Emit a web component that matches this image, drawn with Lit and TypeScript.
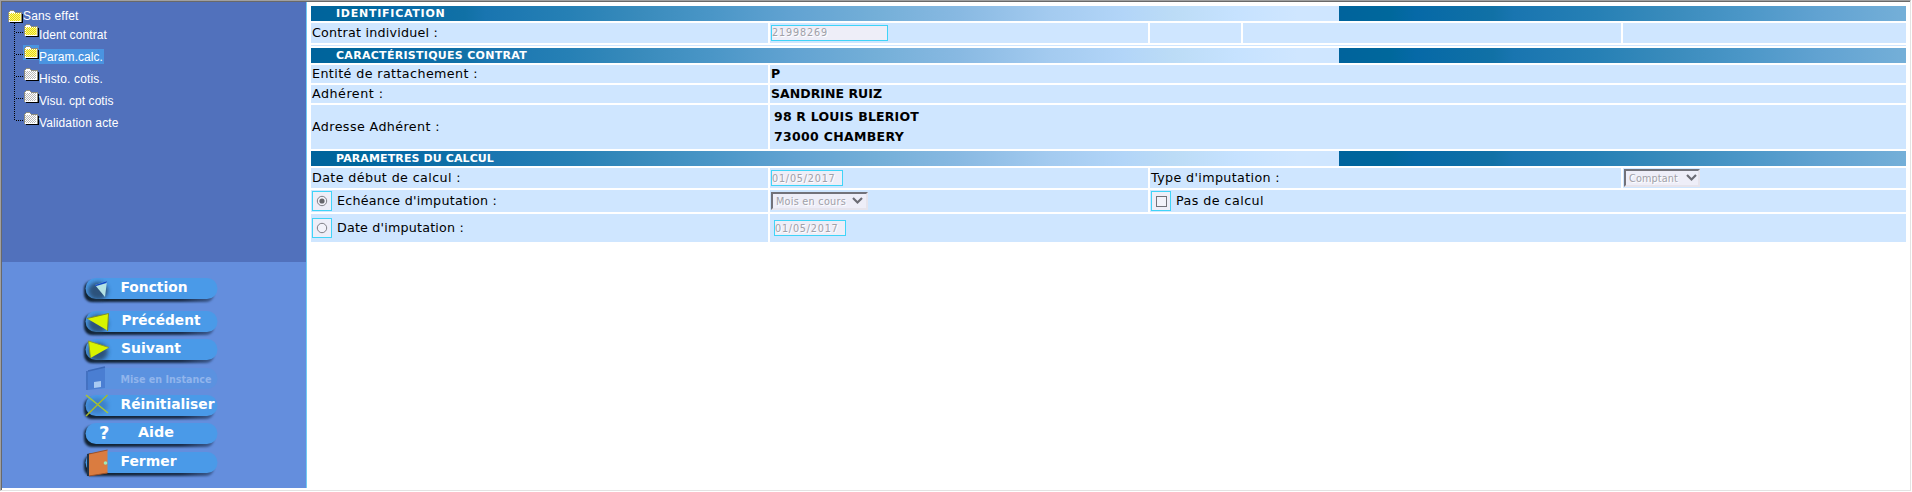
import { LitElement, html, svg, css, nothing } from 'lit';
import { customElement, property } from 'lit/decorators.js';
import { classMap } from 'lit/directives/class-map.js';
import { styleMap } from 'lit/directives/style-map.js';

const measure = document.createElement('canvas').getContext('2d')!;

/** Text tracked so that it takes a given width. */
@customElement('fit-text')
class FitText extends LitElement {
  @property() text = '';
  @property({ type: Number }) width = 0;
  @property() font = '13px "DejaVu Sans"';
  static styles = css`
    :host { display: inline-block; white-space: pre; }
  `;
  render() {
    measure.font = this.font;
    const natural = measure.measureText(this.text).width;
    const tracking = (this.width - natural) / this.text.length;
    return html`<span style=${styleMap({ font: this.font + ', sans-serif', letterSpacing: tracking.toFixed(3) + 'px' })}>${this.text}</span>`;
  }
}

const LABEL = '12.7px "DejaVu Sans"';
const BOLD = 'bold 12.5px "DejaVu Sans"';
const HEAD = 'bold 11px "DejaVu Sans"';
const SMALL = '9.7px "DejaVu Sans"';
const TREE = '12px "Liberation Sans"';

const fit = (text: string, width: number, font = LABEL) =>
  html`<fit-text .text=${text} .width=${width} .font=${font}></fit-text>`;

@customElement('nav-tree')
class NavTree extends LitElement {
  static styles = css`
    :host { display: block; padding: 6px 0 0 6px; color: #fff; }
    .root, .item { display: flex; align-items: flex-start; }
    .root { height: 15px; margin-left: -1px; }
    .root .icon { padding-top: 1px; }
    .label { height: 15px; line-height: 17px; font-size: 12px; padding: 0 1px 0 0; }
    .items { margin-left: 6px; }
    .item { height: 22px; }
    .item .label { margin-top: 4px; }
    .item .icon { width: 16px; height: 15px; padding-top: 0; }
    .on { background: #4a94e1; }
    svg { display: block; }
  `;
  folder(open: boolean) {
    const dots = [];
    for (let y = 0; y < 8; y++) for (let x = y % 2; x < 11; x += 2)
      dots.push(svg`<rect x=${x + 2} y=${y + 4} width="1" height="1"/>`);
    return html`<svg width="16" height="15" shape-rendering="crispEdges">
      <path d="M3 14h13V5h-1v8H3z" fill="#000"/>
      <path d="M1 3h1V2h1V1h4v1h1v1h7v10H1z" fill="#8c8c80"/>
      <path d="M2 3h1V2h4v1h1v1h6v9H2z" fill="#fff"/>
      <path d="M3 5h11v7H3z" fill=${open ? '#fff67c' : '#fff'}/>
      <g fill=${open ? '#e4da10' : '#b8b8b8'}>${dots}</g>
    </svg>`;
  }
  branch(last: boolean) {
    return html`<svg width="9" height="22" shape-rendering="crispEdges" fill="none" stroke="#000">
      <path d=${last ? 'M.5 0V10' : 'M.5 0V22'} stroke-dasharray="1 1"/>
      <path d="M2 9.5H9" stroke-dasharray="1 1"/>
    </svg>`;
  }
  render() {
    const items: [string, number, boolean, boolean][] = [
      ['Ident contrat', 68, true, false],
      ['Param.calc.', 64, true, true],
      ['Histo. cotis.', 64, false, false],
      ['Visu. cpt cotis', 74.5, false, false],
      ['Validation acte', 79.5, false, false],
    ];
    return html`
      <div class="root"><div class="icon">${this.folder(true)}</div><div class="label">${fit('Sans effet', 55.5, TREE)}</div></div>
      <div class="items">${items.map(([text, width, open, on], i) => html`
        <div class="item">${this.branch(i === items.length - 1)}
          <div class=${classMap({ icon: true, on })}>${this.folder(open)}</div>
          <div class=${classMap({ label: true, on })}>${fit(text, width, TREE)}</div>
        </div>`)}
      </div>`;
  }
}

type Command = { text: string; x: number; width: number; gap: number; icon: unknown; off?: boolean };

@customElement('command-bar')
class CommandBar extends LitElement {
  static styles = css`
    :host { display: flex; flex-direction: column; align-items: flex-start; padding: 16px 0 0 81px; box-sizing: border-box; }
    svg { display: block; height: 21px; overflow: visible; }
    text { font-family: "DejaVu Sans", sans-serif; font-weight: bold; font-size: 13.5px; fill: #fff; }
    .off text { font-size: 10.5px; fill: #91b5ec; }
    .g6 { margin-top: 6px; } .g7 { margin-top: 7px; } .g8 { margin-top: 8px; } .g12 { margin-top: 12px; }
  `;
  render() {
    const shade = svg`<ellipse cx="15" cy="13" rx="10" ry="9" fill="#203a58" opacity=".75" filter="url(#soft)"/>`;
    const commands: Command[] = [
      { text: 'Fonction', x: 37.5, width: 67, gap: 0, icon: svg`${shade}<path d="M12 7L24 3L22 19Z" fill="#b4e2e4"/><path d="M12 7L24 3L23.5 5L12.5 8.2Z" fill="#1048c8"/>` },
      { text: 'Précédent', x: 38.5, width: 79, gap: 12, icon: svg`${shade}<path d="M4 7.5L25.5 2.5L24.5 19.5Z" fill="#d8f400"/><path d="M4 7.5L25.5 2.5M25.5 2.5L24.5 20" stroke="#7d8c28" stroke-width="1"/>` },
      { text: 'Suivant', x: 38, width: 60, gap: 7, icon: svg`${shade}<path d="M5.5 2L26 8.5L7.5 19Z" fill="#d8f400"/><path d="M5.5 2L26 8.5M5.5 2L7.5 19" stroke="#8c9c28"/>` },
      { text: 'Mise en Instance', x: 37.5, width: 91, gap: 8, off: true, icon: svg`<path d="M5 3L22 -1V20L5 22Z" fill="#4a7ed2"/><path d="M5 3L22 -1M4 3V22" stroke="#3b68b8" stroke-width="1.5"/><path d="M11 14L18 13V19L11 20Z" fill="#a8caf2"/>` },
      { text: 'Réinitialiser', x: 37.5, width: 94, gap: 6, icon: svg`<ellipse cx="14" cy="11" rx="11" ry="8" fill="#2c5c9c" opacity=".4" filter="url(#soft)"/><path d="M3 0L25 18" stroke="#a8c832" stroke-width="1.5"/><path d="M3 21L24.5 0" stroke="#a8ba28" stroke-width="1.5"/>` },
      { text: 'Aide', x: 55, width: 36, gap: 7, icon: svg`<text x="16" y="15.5" style="font-size:18px">?</text>` },
      { text: 'Fermer', x: 37.5, width: 56, gap: 8, icon: svg`<path d="M4 2L8 1V24H4Z" fill="#203448"/><path d="M6 2L24.5 -2V21L6 24Z" fill="#da7c40"/><path d="M6 2L24.5 -2M6 24L24.5 21" stroke="#9c5028" fill="none"/><circle cx="22.500" cy="11" r="1.8" fill="#9fe8b8"/>` },
    ];
    return commands.map((c) => html`
      <svg width="136" height="21" class=${`g${c.gap} ${c.off ? 'off' : ''}`} role="button">
        <defs>
          <filter id="soft" x="-30%" y="-50%" width="160%" height="200%"><feGaussianBlur stdDeviation="2"/></filter>
          <linearGradient id="cast" x1="0" x2="1"><stop offset="0" stop-color="#10202f"/><stop offset=".75" stop-color="#1b2e4c"/><stop offset="1" stop-color="#1b2e4c" stop-opacity=".5"/></linearGradient>
        </defs>
        ${c.off ? nothing : svg`<rect x="1" y="3" width="130" height="21" rx="8" fill="url(#cast)" style="filter:blur(1.3px)"/>`}
        <rect x="2.5" y="0" width="132" height="21" rx="10.5" fill=${c.off ? '#5b92e0' : '#4a9ae8'}/>
        ${c.icon}
        <text x=${c.x} y=${c.off ? 14.5 : 14.3} textLength=${c.width} lengthAdjust="spacingAndGlyphs">${c.text}</text>
      </svg>`);
  }
}

@customElement('contract-form')
class ContractForm extends LitElement {
  static styles = css`
    :host {
      display: grid; gap: 2px; color: #000; align-content: start;
      grid-template-columns: 457px 378px 91px 378px 283px;
      grid-template-rows: 15px 20px 1px 15px 18px 18px 44px 15px 20px 22px 28px;
    }
    .head {
      grid-column: 1 / -1; color: #fff; padding-left: 25px; height: 15px; display: flex; align-items: center; line-height: 13px;
      background: linear-gradient(90deg, #00639c 0, #00689c 5%, #0669a7 7.5%, #1171a6 15%, #1975b0 17%, #2680b5 25%, #398bbc 32%,
        #4a96c7 39%, #62a3d2 47%, #74afd8 55%, #88b9e2 63%, #a4cbf0 72%, #b2d5f8 79%, #bcdcf6 84%, #c6e2ff 90%, #cfe6ff 96%) 0 0 / 1028px 100%;
    }
    .cell { background: #cfe6ff; display: flex; align-items: center; padding-left: 1px; line-height: 16px; }
    .wide { grid-column: 1 / -1; }
    .rest { grid-column: 2 / -1; }
    .two { grid-column: span 2; }
    .toend { grid-column: 3 / -1; }
    .c { display: flex; flex-direction: column; align-items: flex-start; justify-content: center; gap: 4px; padding-left: 4px; }
    .field {
      box-sizing: border-box; height: 16px; width: 72px; border: 1px solid #40d4f8; background: #eeeef8;
      color: #a0a0a8; text-shadow: 1px 1px #fff; display: flex; align-items: center; line-height: 12px; padding-bottom: 1px;
    }
    .long { width: 117px; }
    .in { margin-left: 3px; }
    .drop {
      box-sizing: border-box; height: 18px; width: 97px; border: 2px solid; border-color: #72727a #e6e4ec #e6e4ec #72727a;
      background: #eeeef8; color: #a0a0a8; text-shadow: 1px 1px #fff; display: flex; align-items: center;
      justify-content: space-between; padding: 0 3px; line-height: 12px;
    }
    .short { width: 76px; padding: 0 1px 0 3px; }
    .tick { box-sizing: border-box; width: 20px; height: 20px; margin-right: 5px; border: 1px solid #40d4f8; background: #eeeef8; flex: none; }
    .raise { margin-bottom: 1px; }
    svg { display: block; }
  `;
  head(text: string, width: number) {
    return html`<div class="head">${fit(text, width, HEAD)}</div>`;
  }
  field(text: string, width: number, cls = '') {
    return html`<div class="field ${cls}">${fit(text, width, SMALL)}</div>`;
  }
  drop(text: string, width: number, cls = '') {
    return html`<div class="drop ${cls}">${fit(text, width, SMALL)}
      <svg width="11" height="8"><path d="M1 1L5.5 5.5L10 1" fill="none" stroke="#6c6c74" stroke-width="2.2"/></svg></div>`;
  }
  radio(on: boolean) {
    return html`<div class="tick"><svg width="18" height="18">
      <circle cx="9" cy="9" r="4.7" fill="#f2f2fa" stroke="#808088"/>
      ${on ? svg`<circle cx="9" cy="9" r="2.6" fill="#66666c"/>` : nothing}</svg></div>`;
  }
  render() {
    return html`
      ${this.head('IDENTIFICATION', 109.5)}
      <div class="cell">${fit('Contrat individuel :', 126)}</div>
      <div class="cell"><div class="raise">${this.field('21998269', 56, 'long')}</div></div>
      <div class="cell"></div><div class="cell"></div><div class="cell"></div>
      <div class="cell wide"></div>
      ${this.head('CARACTÉRISTIQUES CONTRAT', 191)}
      <div class="cell">${fit('Entité de rattachement :', 166)}</div>
      <div class="cell rest">${fit('P', 9.5, BOLD)}</div>
      <div class="cell">${fit('Adhérent :', 71.5)}</div>
      <div class="cell rest">${fit('SANDRINE RUIZ', 111, BOLD)}</div>
      <div class="cell">${fit('Adresse Adhérent :', 128)}</div>
      <div class="cell rest c">${fit('98 R LOUIS BLERIOT', 145, BOLD)}${fit('73000 CHAMBERY', 130, BOLD)}</div>
      ${this.head('PARAMETRES DU CALCUL', 158)}
      <div class="cell">${fit('Date début de calcul :', 149)}</div>
      <div class="cell">${this.field('01/05/2017', 63.5)}</div>
      <div class="cell two">${fit("Type d'imputation :", 129)}</div>
      <div class="cell">${this.drop('Comptant', 49, 'short')}</div>
      <div class="cell">${this.radio(true)}${fit("Echéance d'imputation :", 160)}</div>
      <div class="cell">${this.drop('Mois en cours', 70)}</div>
      <div class="cell toend">
        <div class="tick"><svg width="18" height="18"><rect x="4.5" y="4.5" width="10" height="10" fill="#f2f2fa" stroke="#72727a"/></svg></div>
        ${fit('Pas de calcul', 88)}
      </div>
      <div class="cell">${this.radio(false)}${fit("Date d'imputation :", 127)}</div>
      <div class="cell rest"><div class="in">${this.field('01/05/2017', 63.5)}</div></div>`;
  }
}

@customElement('app-root')
class AppRoot extends LitElement {
  static styles = css`
    :host {
      display: flex; box-sizing: border-box; width: 1911px; height: 491px; background: #fff;
      border: 1px solid; border-color: #a0a0a0 #e3e3e3 #e3e3e3 #a0a0a0;
      font-family: "DejaVu Sans", sans-serif; font-size: 12px;
    }
    .inner { display: flex; flex: 1; border: solid #696969; border-width: 1px 0 0 1px; }
    .side { width: 304px; height: 486px; border-right: 1px solid #70ccf4; display: flex; flex-direction: column; }
    nav-tree { background: #5171bc; height: 254px; }
    command-bar { background: #648edd; flex: 1; }
    contract-form { margin: 4px 0 0 4px; }
  `;
  render() {
    return html`<div class="inner">
      <div class="side"><nav-tree></nav-tree><command-bar></command-bar></div>
      <contract-form></contract-form>
    </div>`;
  }
}
